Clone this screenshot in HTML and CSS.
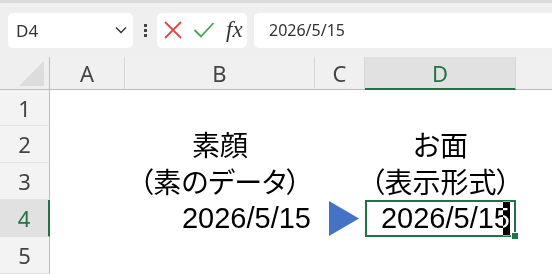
FILE: index.html
```html
<!DOCTYPE html>
<html lang="ja">
<head>
    <meta charset="UTF-8">
    <title>Sheet</title>
    <link rel="stylesheet" href="styles.css">
</head>
<body>
    <div class="toolbar">
        <div class="name-box">
            <span>D4</span>
            <svg class="chevron" width="12" height="8" viewBox="0 0 12 8"><path d="M1 1.5 L6 6.5 L11 1.5" fill="none" stroke="#333" stroke-width="1.4"/></svg>
        </div>
        <div class="dots"><i></i><i></i><i></i></div>
        <div class="buttons">
            <svg width="20" height="20" viewBox="0 0 20 20"><path d="M2 2 L18 18 M18 2 L2 18" stroke="#e0474c" stroke-width="1.8"/></svg>
            <svg width="22" height="20" viewBox="0 0 22 20"><path d="M1.5 10 L8 16.5 L20.5 3" fill="none" stroke="#3fa25a" stroke-width="1.8"/></svg>
            <span class="fx">fx</span>
        </div>
        <div class="formula">2026/5/15</div>
    </div>

    <div class="sheet">
        <!-- column headers -->
        <div class="corner"><div class="tri"></div></div>
        <div class="col-head">A</div>
        <div class="col-head">B</div>
        <div class="col-head">C</div>
        <div class="col-head active">D</div>
        <div class="col-head last"></div>

        <!-- row 1 -->
        <div class="row-head">1</div>
        <div class="cell"></div><div class="cell"></div><div class="cell"></div><div class="cell"></div><div class="cell"></div>

        <!-- row 2 -->
        <div class="row-head">2</div>
        <div class="cell"></div>
        <div class="cell center">素顔</div>
        <div class="cell"></div>
        <div class="cell center">お面</div>
        <div class="cell"></div>

        <!-- row 3 -->
        <div class="row-head">3</div>
        <div class="cell"></div>
        <div class="cell center">（素のデータ）</div>
        <div class="cell"></div>
        <div class="cell center">（表示形式）</div>
        <div class="cell"></div>

        <!-- row 4 -->
        <div class="row-head active">4</div>
        <div class="cell"></div>
        <div class="cell right num">2026/5/15</div>
        <div class="cell arrow">
            <svg width="30" height="35" viewBox="0 0 30 35"><path d="M0 0 L30 17.5 L0 35 Z" fill="#4472c4"/></svg>
        </div>
        <div class="cell right num selected">
            <span class="edit">2026/5/15<span class="caret"></span></span>
            <span class="handle"></span>
        </div>
        <div class="cell"></div>

        <!-- row 5 -->
        <div class="row-head">5</div>
        <div class="cell"></div><div class="cell"></div><div class="cell"></div><div class="cell"></div><div class="cell"></div>
    </div>
</body>
</html>
```

FILE: styles.css
```css
body {
    margin: 0;
    width: 552px;
    height: 274px;
    overflow: hidden;
    background-color: #fff;
    font-family: "Noto Sans", "Noto Sans CJK JP", sans-serif;
}
.toolbar {
    display: flex;
    align-items: center;
    height: 57px;
    padding: 0 0 0 8px;
    box-sizing: border-box;
    background-color: #efefef;
    border-top: 3px solid #dadada;
}
.name-box {
    display: flex;
    align-items: center;
    justify-content: space-between;
    width: 125px;
    height: 35px;
    padding: 0 6px 0 8px;
    box-sizing: border-box;
    background-color: #fff;
    border-radius: 5px;
    font-size: 17px;
    color: #333;
}
.dots {
    display: flex;
    flex-direction: column;
    gap: 2px;
    margin: 0 10px 0 11px;
}
.dots i {
    display: block;
    width: 3px;
    height: 3px;
    background-color: #444;
}
.buttons {
    display: flex;
    align-items: center;
    gap: 10px;
    width: 90px;
    height: 35px;
    padding: 0 0 0 6px;
    box-sizing: border-box;
    background-color: #fff;
    border-radius: 5px;
}
.fx {
    font-family: "Liberation Serif", "DejaVu Serif", serif;
    font-style: italic;
    font-size: 23px;
    color: #333;
    margin-left: 1px;
}
.formula {
    flex: 1;
    height: 35px;
    margin-left: 7px;
    padding-left: 15px;
    line-height: 35px;
    background-color: #fff;
    border-radius: 5px 0 0 5px;
    font-size: 16px;
    color: #333;
}

/* grid */
.sheet {
    display: grid;
    grid-template-columns: 50px 75px 190px 50px 151px 1fr;
    grid-template-rows: 33px 36px 37px 37px 37px 37px;
}
.corner {
    background-color: #efefef;
    border-right: 1px solid #bdbdbd;
    border-bottom: 1px solid #bdbdbd;
    display: flex;
    align-items: flex-end;
    justify-content: flex-end;
    padding: 0 5px 3px 0;
}
.tri {
    width: 0;
    height: 0;
    border-left: 25px solid transparent;
    border-bottom: 25px solid #dcdcdc;
}
.col-head {
    display: flex;
    align-items: center;
    justify-content: center;
    background-color: #f0f0f0;
    border-right: 1px solid #d6d6d6;
    border-bottom: 1px solid #bdbdbd;
    font-size: 22px;
    color: #444;
}
.col-head.active {
    background-color: #e1e1e1;
    color: #217346;
    border-bottom: 2px solid #217346;
}
.col-head.last {
    border-right: none;
}
.row-head {
    display: flex;
    align-items: center;
    justify-content: center;
    background-color: #f3f3f3;
    border-right: 1px solid #bdbdbd;
    border-bottom: 1px solid #e0e0e0;
    font-size: 22px;
    color: #444;
}
.row-head.active {
    background-color: #e1e1e1;
    color: #217346;
    border-right: 2px solid #217346;
}
.cell {
    display: flex;
    align-items: flex-end;
    padding: 0 4px 2px 4px;
    font-family: "Liberation Sans", "Noto Sans CJK JP", sans-serif;
    font-size: 28px;
    line-height: 1;
    color: #000;
    white-space: nowrap;
    font-feature-settings: "palt";
}
.cell.num {
    font-size: 29px;
    padding-bottom: 4px;
}
.cell.center {
    justify-content: center;
}
.cell.right {
    justify-content: flex-end;
}
.cell.arrow {
    align-items: center;
    justify-content: center;
    padding: 0 0 0 8px;
}
.cell.selected {
    position: relative;
    border: 2px solid #217346;
    padding: 0 4px 2px 2px;
}
.edit {
    position: relative;
}
.caret {
    position: absolute;
    right: 0;
    top: -3px;
    bottom: -3px;
    width: 7px;
    background-color: #fff;
    mix-blend-mode: difference;
}
.handle {
    position: absolute;
    right: -5px;
    bottom: -5px;
    width: 6px;
    height: 6px;
    background-color: #217346;
    border: 1px solid #fff;
}
```
